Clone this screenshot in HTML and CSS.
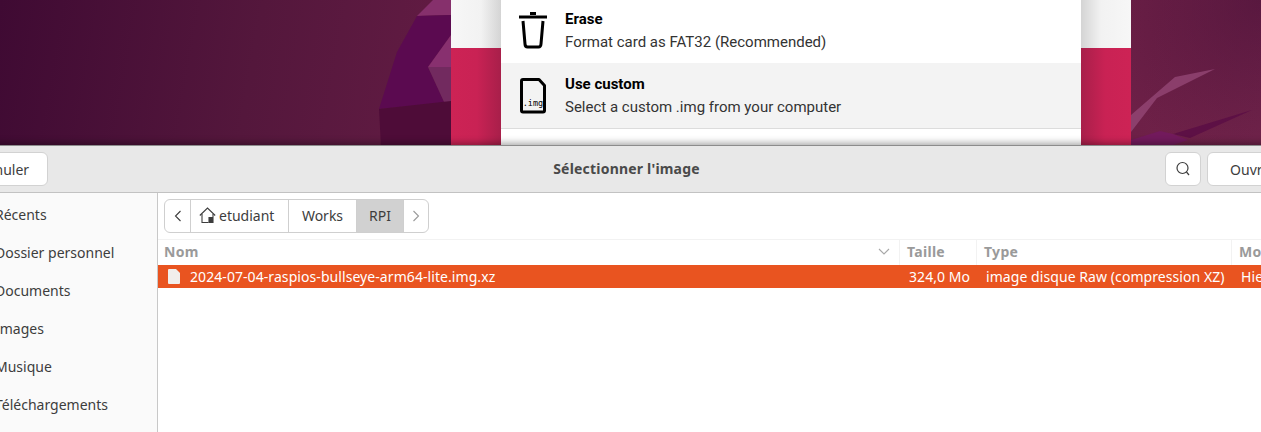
FILE: index.html
```html
<!DOCTYPE html>
<html lang="fr">
  <head>
    <meta charset="UTF-8" />
    <title>Sélectionner l'image</title>
    <link rel="stylesheet" href="styles.css">
  </head>
  <body>
    <div class="desktop">
      <svg class="wallpaper" width="1261" height="145" viewBox="0 0 1261 145">
        <polygon points="417,16 433,0 451,0 451,15" fill="#86306c" />
        <polygon points="417,16 451,15 451,35 428,67 451,117 451,102 379,109 397,52" fill="#5b0a50" />
        <polygon points="428,67 451,35 451,67" fill="#88306f" />
        <polygon points="428,67 451,67 451,117" fill="#722a5f" />
        <polygon points="379,109 451,101 451,146 381,146" fill="#4e0c38" />
        <polygon points="1131,115 1175,77 1215,69 1157,98 1131,132" fill="#974a78" opacity="0.75" />
        <polygon points="1173,134 1252,110 1190,138" fill="#5d1045" />
        <polygon points="1131,140 1160,131 1173,134 1188,140 1170,146 1131,146" fill="#721a5c" />
      </svg>
      <div class="imager">
        <div class="imager-strip">
          <div class="strip-top"></div>
          <div class="strip-red"></div>
        </div>
        <div class="imager-list">
          <div class="os-row">
            <svg class="os-icon" width="30" height="37" viewBox="0 0 30 37" fill="none" stroke="#000" stroke-width="3">
              <path d="M0 5h28" />
              <path d="M11 1.500h6" />
              <path d="M4 9l2 23q.2 3 2.500 3h11q2.300 0 2.500-3l2-23" stroke-linejoin="round" />
            </svg>
            <div>
              <div class="os-name">Erase</div>
              <div class="os-desc">Format card as FAT32 (Recommended)</div>
            </div>
          </div>
          <div class="os-row hover">
            <svg class="os-icon" width="30" height="38" viewBox="0 0 30 38" fill="none">
              <path d="M4 3.500h16l5.500 6v25q0 1.500-1.500 1.500H4q-1.500 0-1.500-1.500V5q0-1.500 1.500-1.500z" stroke="#000" stroke-width="3" stroke-linejoin="round" />
              <text x="14" y="30" class="img-label">.img</text>
            </svg>
            <div>
              <div class="os-name">Use custom</div>
              <div class="os-desc">Select a custom .img from your computer</div>
            </div>
          </div>
        </div>
        <div class="imager-strip right">
          <div class="strip-top"></div>
          <div class="strip-red"></div>
        </div>
      </div>
    </div>

    <div class="dialog">
      <div class="header">
        <div class="header-left"><button class="btn cancel">Annuler</button></div>
        <div class="title">Sélectionner l'image</div>
        <div class="header-right">
          <button class="btn search">
            <svg width="16" height="16" viewBox="0 0 16 16" fill="none" stroke="#3d3d3d" stroke-width="1.200">
              <circle cx="7.500" cy="7" r="5.500" />
              <path d="M11.500 11l2.500 3" />
            </svg>
          </button>
          <button class="btn open">Ouvrir</button>
        </div>
      </div>
      <div class="body">
        <div class="sidebar">
          <div class="place">Récents</div>
          <div class="place">Dossier personnel</div>
          <div class="place">Documents</div>
          <div class="place">Images</div>
          <div class="place">Musique</div>
          <div class="place">Téléchargements</div>
        </div>
        <div class="main">
          <div class="pathbar">
            <div class="seg arrow">
              <svg width="8" height="12" viewBox="0 0 8 12" fill="none" stroke="#3d3d3d" stroke-width="1.100"><path d="M6.500 1L1.500 6l5 5" /></svg>
            </div>
            <div class="seg home">
              <svg width="17" height="16" viewBox="0 0 17 16" fill="none" stroke="#3d3d3d" stroke-width="1.100">
                <path d="M.8 8.500L8.500 1l7.700 7.500" />
                <path d="M3 7v8.500h6.500" />
                <path d="M14 7v8.500h-4V10" />
                <rect x="10" y="10" width="4" height="6" fill="#3d3d3d" stroke="none" />
              </svg>
              etudiant
            </div>
            <div class="seg works">Works</div>
            <div class="seg current">RPI</div>
            <div class="seg arrow last">
              <svg width="8" height="12" viewBox="0 0 8 12" fill="none" stroke="#9a9a9a" stroke-width="1.100"><path d="M1.500 1l5 5-5 5" /></svg>
            </div>
          </div>
          <div class="list-head cols">
            <div class="col col-name">Nom
              <svg width="12" height="7" viewBox="0 0 12 7" fill="none" stroke="#a8a8a8" stroke-width="1.100"><path d="M1 1l5 5 5-5" /></svg>
            </div>
            <div class="col">Taille</div>
            <div class="col">Type</div>
            <div class="col">Modifié</div>
          </div>
          <div class="file cols">
            <div class="cell cell-name">
              <svg width="12" height="15" viewBox="0 0 12 15"><path d="M1 0h7l4 4v10q0 1-1 1H1q-1 0-1-1V1q0-1 1-1z" fill="#f1eeeb" /></svg>
              2024-07-04-raspios-bullseye-arm64-lite.img.xz
            </div>
            <div class="cell">324,0 Mo</div>
            <div class="cell">image disque Raw (compression XZ)</div>
            <div class="cell">Hier</div>
          </div>
        </div>
      </div>
    </div>
  </body>
</html>
```

FILE: styles.css
```css
* {
  box-sizing: border-box;
}

html,
body {
  width: 100%;
  height: 100%;
  margin: 0;
  overflow: hidden;
  background-color: #fff;
}

body {
  font-family: "Noto Sans", "DejaVu Sans", sans-serif;
  font-size: 14px;
  color: #3d3d3d;
}

.desktop {
  position: relative;
  height: 145px;
  padding-left: 451px;
  overflow: hidden;
  background:
    radial-gradient(circle at 1261px 0, rgba(60, 10, 50, 0.45), transparent 170px),
    linear-gradient(100deg, #3f0a33 0, #54173c 260px, #641c44 480px, #6d2047 1140px, #72244b 1261px);
}

.wallpaper {
  position: absolute;
  top: 0;
  left: 0;
}

.imager {
  position: relative;
  display: flex;
  width: 680px;
  height: 146px;
}

.imager-strip {
  display: flex;
  flex-direction: column;
  width: 50px;
}

.strip-top {
  height: 48px;
  background: linear-gradient(90deg, #f7f7f7 0, #f2f2f2 30px, #d4d4d4 50px);
}

.strip-red {
  flex: 1;
  background: linear-gradient(90deg, #cd2355 0, #c92254 26px, #a81f4a 50px);
}

.imager-strip.right .strip-top {
  background: linear-gradient(270deg, #f7f7f7 0, #f2f2f2 30px, #d4d4d4 50px);
}

.imager-strip.right .strip-red {
  background: linear-gradient(270deg, #cd2355 0, #c92254 26px, #a81f4a 50px);
}

.imager-list {
  flex: 1;
  margin-top: -2px;
  background-color: #fff;
  font-family: Roboto, "Liberation Sans", sans-serif;
  font-size: 15px;
}

.os-row {
  display: flex;
  align-items: center;
  gap: 16px;
  height: 65px;
  padding-left: 18px;
  color: #333;
}

.os-row.hover {
  border-bottom: 1px solid #dcdcdc;
  height: 66px;
  padding-bottom: 1px;
  background-color: #f3f3f3;
}

.os-icon {
  flex: none;
}

.os-name {
  margin-bottom: 5px;
  font-weight: 700;
  line-height: 18px;
  color: #000;
}

.os-desc {
  line-height: 18px;
}

.img-label {
  font-family: "DejaVu Sans Mono", monospace;
  font-size: 8.500px;
  text-anchor: middle;
  fill: #000;
}

.dialog {
  position: relative;
  width: 1349px;
  height: 287px;
  margin-left: -48px;
  border-top: 1px solid #8c8c8c;
  box-shadow: 0 -2px 7px rgba(0, 0, 0, 0.35);
  background-color: #fff;
}

.header {
  display: grid;
  grid-template-columns: 1fr auto 1fr;
  align-items: center;
  height: 47px;
  padding: 0 6px;
  border-bottom: 1px solid #c2c2c2;
  background-color: #e8e8e8;
}

.header-right {
  display: flex;
  justify-content: flex-end;
  gap: 6px;
}

.title {
  padding-bottom: 2px;
  font-weight: 700;
  font-size: 14px;
  letter-spacing: 0.2px;
  color: #4a4a4a;
}

.btn {
  display: flex;
  justify-content: center;
  align-items: center;
  height: 34px;
  padding: 0;
  border: 1px solid #d2d2d2;
  border-radius: 6px;
  background-color: #fff;
  font: inherit;
  color: #3d3d3d;
}

.cancel {
  width: 90px;
}

.search {
  width: 36px;
}

.open {
  width: 88px;
}

.body {
  display: flex;
  height: 239px;
}

.sidebar {
  flex: none;
  width: 206px;
  padding: 2px 0 0 43px;
  border-right: 1px solid #c8c8c8;
  background-color: #fafafa;
}

.place {
  display: flex;
  align-items: center;
  height: 38px;
}

.main {
  flex: 1;
  min-width: 0;
}

.pathbar {
  display: flex;
  width: 265px;
  height: 34px;
  margin: 6px 0 6px 6px;
  border: 1px solid #cfcfcf;
  border-radius: 6px;
  overflow: hidden;
}

.seg {
  display: flex;
  align-items: center;
  justify-content: center;
  padding-bottom: 2px;
  border-right: 1px solid #cfcfcf;
}

.seg.arrow {
  width: 26px;
  padding-bottom: 0;
}

.seg.last {
  flex: 1;
  border-right: 0;
}

.seg.home {
  justify-content: flex-start;
  gap: 3px;
  width: 98px;
  padding-left: 8px;
}

.seg.works {
  width: 68px;
}

.seg.current {
  width: 47px;
  background-color: #d1d1d1;
}

.cols {
  display: grid;
  grid-template-columns: 742px 77px 255px 1fr;
}

.list-head {
  height: 26px;
  border-top: 1px solid #f2f2f2;
  font-weight: 700;
  font-size: 14px;
  letter-spacing: 0.3px;
  color: #9a9a9a;
}

.col {
  display: flex;
  align-items: center;
  justify-content: space-between;
  padding-left: 7px;
  padding-bottom: 2px;
  border-right: 1px solid #f2f2f2;
}

.col-name {
  padding-left: 6px;
  padding-right: 9px;
}

.file {
  height: 23px;
  background-color: #e95420;
  color: #fff;
  letter-spacing: 0.07px;
}

.cell {
  display: flex;
  align-items: center;
  padding-left: 9px;
  white-space: nowrap;
}

.cell-name {
  gap: 10px;
  padding-left: 10px;
}
```
